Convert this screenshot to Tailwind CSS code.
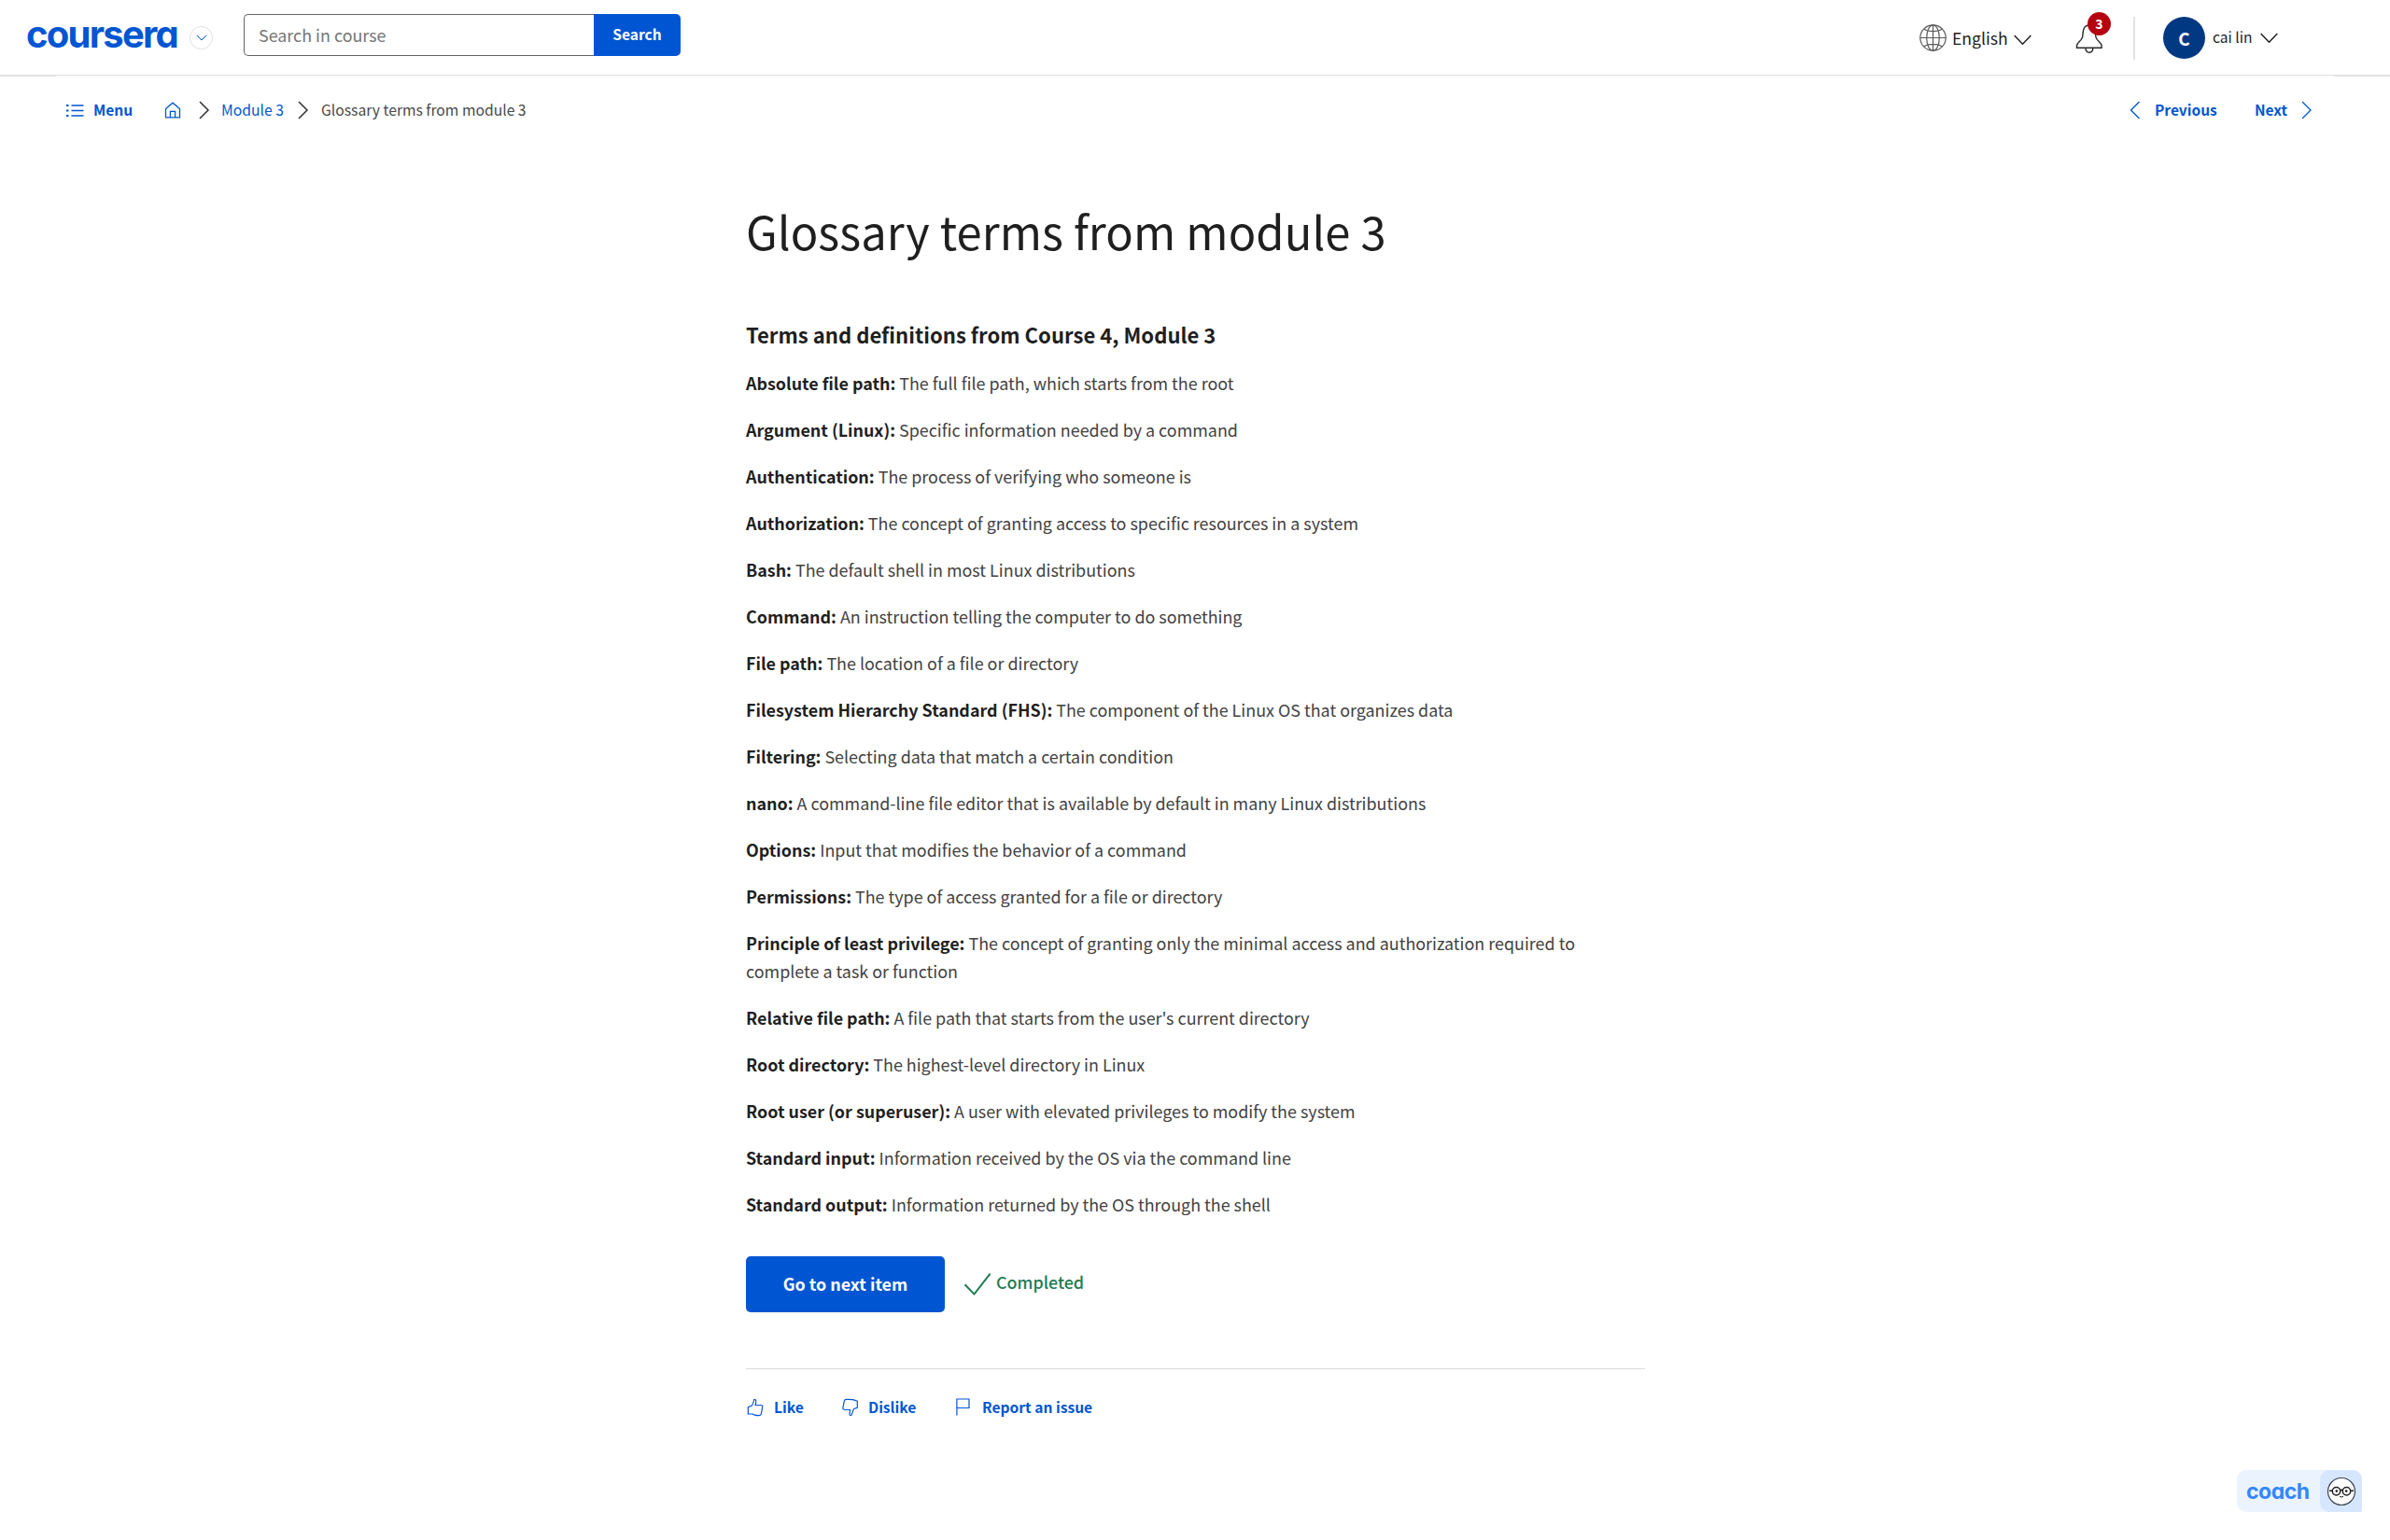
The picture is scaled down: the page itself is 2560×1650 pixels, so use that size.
<!DOCTYPE html>
<html lang="en">
<head>
<meta charset="utf-8">
<title>Glossary terms from module 3</title>
<script src="https://cdn.jsdelivr.net/npm/@tailwindcss/browser@4"></script>
</head>
<body class="flex h-[1650px] w-[2560px] flex-col overflow-hidden bg-white font-['Noto_Sans_CJK_SC','Noto_Sans',sans-serif] text-[#1f1f1f]">

<header class="flex h-[81px] shrink-0 items-start border-b border-[#dfdfdf] pl-[28px]">
  <a class="flex h-[73px] w-[175px] items-center font-['Inter',sans-serif] text-[40px] leading-none font-bold tracking-[-1.75px] text-[#0056d2] [font-feature-settings:'cv11']">coursera</a>
  <button class="mt-[28px] flex size-[25px] items-center justify-center rounded-full border border-[#e1e1e1]">
    <svg class="h-[7px] w-[12px]" viewBox="0 0 12 7" fill="none" stroke="#0056d2"><path d="M.8.8 6 6 11.2.8"/></svg>
  </button>
  <form class="mt-[15px] ml-[33px] flex h-[45px] w-[468px]">
    <div class="flex w-[375px] items-center rounded-l-[5px] border border-r-0 border-[#636363] pl-[15px] text-[17.9px] leading-none text-[#757575]">Search in course</div>
    <div class="flex flex-1 items-center justify-center rounded-r-[5px] bg-[#0056d2] pb-px text-[15.5px] leading-none font-bold text-white">Search</div>
  </form>
  <div class="ml-auto flex h-[81px] items-center">
    <svg class="size-[29px]" viewBox="0 0 29 29" fill="none" stroke="#5a5a5a" stroke-width="1.2"><circle cx="14.5" cy="14.5" r="13.7"/><ellipse cx="14.5" cy="14.5" rx="6.8" ry="13.7"/><path d="M14.5.8v27.4M.8 14.5h27.4M4.6 5.3c5 3.2 14.8 3.2 19.8 0M4.6 23.7c5-3.2 14.8-3.2 19.8 0"/></svg>
    <span class="ml-[6px] w-[66px] text-[17.6px] leading-none">English</span>
    <svg class="mt-1 h-[12px] w-[19px]" viewBox="0 0 19 12" fill="none" stroke="#1f1f1f" stroke-width="1.5"><path d="M.7 1 9.5 10.2 18.3 1"/></svg>
    <div class="relative ml-[47px] h-[32px] w-[30px]">
      <svg class="h-[32px] w-[30px]" viewBox="0 0 30 32" fill="none" stroke="#2a2a2a" stroke-width="1.4"><path d="M1.5 26.3h26.6v-2.5c0-2.8-5.5-5.3-6.3-9.5-.5-4 .2-12.3-7-12.3S8.200 10.300 7.700 14.300C7 18.500 1.500 21 1.500 23.800zM11 26.600c0 6.200 7.800 6.200 7.800 0"/></svg>
      <span class="absolute -top-[12px] left-[13px] flex size-[25px] items-center justify-center rounded-full bg-[#b5000f] text-[14px] leading-none font-bold text-white">3</span>
    </div>
    <div class="ml-[32px] h-[46px] w-[2px] bg-[#e1e1e1]"></div>
    <div class="ml-[30px] flex size-[45px] items-center justify-center rounded-full bg-[#003882] text-[19px] leading-none font-bold text-white">C</div>
    <span class="ml-[8px] w-[51px] pb-[2px] text-[15.6px] leading-none whitespace-nowrap">cai lin</span>
    <svg class="mr-[120px] mt-px h-[12px] w-[19px]" viewBox="0 0 19 12" fill="none" stroke="#1f1f1f" stroke-width="1.5"><path d="M.7 1 9.5 10.2 18.3 1"/></svg>
  </div>
</header>
<div class="flex h-px shrink-0 justify-between"><div class="w-[60px] bg-[#e5e5e5]"></div><div class="w-[60px] bg-[#e5e5e5]"></div></div>

<nav class="flex h-[72px] shrink-0 items-center pr-[83px] pl-[71px] text-[15.7px] leading-none text-[#0056d2]">
  <svg class="h-[15px] w-[19px]" viewBox="0 0 19 15" fill="none" stroke="#0056d2"><path d="M0 2h2.500M0 7.500h2.500M0 13h2.500" stroke-width="2"/><path d="M5.500 2H18.500M5.500 7.500H18.500M5.500 13H18.500" stroke-width="1.300"/></svg>
  <span class="ml-[10px] w-[76px] text-[15.6px] font-bold">Menu</span>
  <svg class="h-[18px] w-[18px]" viewBox="0 0 18 18" fill="none" stroke="#0056d2" stroke-width="1.3"><path d="M1.500 16.800V7.500L9 1.200l7.500 6.300v9.300zM6.400 16.800V10.400h5.200v6.400"/></svg>
  <svg class="ml-[19px] h-[20px] w-[12px]" viewBox="0 0 12 20" fill="none" stroke="#333" stroke-width="1.5"><path d="M1 1l9 9-9 9"/></svg>
  <span class="ml-[12px] w-[82px]">Module 3</span>
  <svg class="h-[20px] w-[12px]" viewBox="0 0 12 20" fill="none" stroke="#333" stroke-width="1.5"><path d="M1 1l9 9-9 9"/></svg>
  <span class="ml-[13px] text-[#494949]">Glossary terms from module 3</span>
  <svg class="ml-auto h-[20px] w-[12px]" viewBox="0 0 12 20" fill="none" stroke="#0056d2" stroke-width="1.3"><path d="M10.500 1l-9 9 9 9"/></svg>
  <span class="ml-[15px] w-[107px] text-[15.5px] font-bold">Previous</span>
  <span class="w-[50px] text-[15.5px] font-bold">Next</span>
  <svg class="h-[20px] w-[12px]" viewBox="0 0 12 20" fill="none" stroke="#0056d2" stroke-width="1.3"><path d="M1 1l9 9-9 9"/></svg>
</nav>

<main class="ml-[799px] flex w-[963px] flex-col">
  <h1 class="mt-[58px] text-[48.9px] leading-[70px] tracking-[0.05px]">Glossary terms from module 3</h1>
  <h2 class="mt-[57px] text-[22.1px] leading-[38px] font-bold">Terms and definitions from Course 4, Module 3</h2>
  <div class="mt-[18px] flex w-[920px] flex-col gap-[20px] text-[17.91px] leading-[30px] text-[#424242] [&_b]:font-bold [&_b]:text-[#1f1f1f]">
    <p><b>Absolute file path:</b> The full file path, which starts from the root</p>
    <p><b>Argument (Linux):</b> Specific information needed by a command</p>
    <p><b>Authentication:</b> The process of verifying who someone is</p>
    <p><b>Authorization:</b> The concept of granting access to specific resources in a system</p>
    <p><b>Bash:</b> The default shell in most Linux distributions</p>
    <p><b>Command:</b> An instruction telling the computer to do something</p>
    <p><b>File path:</b> The location of a file or directory</p>
    <p><b>Filesystem Hierarchy Standard (FHS):</b> The component of the Linux OS that organizes data</p>
    <p><b>Filtering:</b> Selecting data that match a certain condition</p>
    <p><b>nano:</b> A command-line file editor that is available by default in many Linux distributions</p>
    <p><b>Options:</b> Input that modifies the behavior of a command</p>
    <p><b>Permissions:</b> The type of access granted for a file or directory</p>
    <p><b>Principle of least privilege:</b> The concept of granting only the minimal access and authorization required to complete a task or function</p>
    <p><b>Relative file path:</b> A file path that starts from the user's current directory</p>
    <p><b>Root directory:</b> The highest-level directory in Linux</p>
    <p><b>Root user (or superuser):</b> A user with elevated privileges to modify the system</p>
    <p><b>Standard input:</b> Information received by the OS via the command line</p>
    <p><b>Standard output:</b> Information returned by the OS through the shell</p>
  </div>
  <div class="mt-[41px] flex h-[60px] items-center">
    <button class="flex h-[60px] w-[213px] items-center justify-center rounded-[5px] bg-[#0056d2] text-[17.9px] leading-none font-bold text-white">Go to next item</button>
    <svg class="ml-[20px] h-[26px] w-[30px]" viewBox="0 0 30 26" fill="none" stroke="#1d7c50" stroke-width="2"><path d="M1.500 13.300 11.500 23.600 28.600 1.600"/></svg>
    <span class="ml-[5px] pb-[4px] text-[17.9px] leading-none font-medium text-[#1d7c50]">Completed</span>
  </div>
  <div class="mt-[60px] flex h-[82px] items-center border-t border-[#dadada] text-[15.6px] leading-none font-bold text-[#0056d2]">
    <svg class="h-[20px] w-[19px]" viewBox="0 0 19 20" fill="none" stroke="#0056d2" stroke-width="1.2"><path d="M2.300 16.900V9.700L6.300 8C7.500 6.300 8.200 4.800 8.500 2.200c.4-1.200 2-.9 2.200.5.200 1.700-.2 3.300-.6 4.800h6c1.500 0 1.800 1 1.600 2l-1.300 7.200c-.3 1.300-1 1.900-2.400 1.900-2.700 0-5.200 0-7-1.600z"/></svg>
    <span class="ml-[11px] w-[72px]">Like</span>
    <svg class="h-[20px] w-[19px] -scale-y-100" viewBox="0 0 19 20" fill="none" stroke="#0056d2" stroke-width="1.2"><path d="M17.300 16.900V9.700L13.500 8.500C12.500 6.500 12 4.300 11.200 2.200c-.5-1.200-2.200-.9-2.200.5.100 1.700.4 3.300.6 4.800h-5.500c-1.500 0-2.400 1-2.200 2l1.300 7.200c.3 1.300 1 1.900 2.400 1.900 2.700.1 7.900 0 9.700-1.200z"/></svg>
    <span class="ml-[10px] w-[94px]">Dislike</span>
    <svg class="h-[19px] w-[15px]" viewBox="0 0 15 19" fill="none" stroke="#0056d2" stroke-width="1.2"><path d="M.9 18.500V1H14v9.500H.9"/></svg>
    <span class="ml-[13px]">Report an issue</span>
  </div>
</main>

<button class="absolute top-[1575px] left-[2396px] flex h-[45px] w-[134px] items-center overflow-hidden rounded-[10px] rounded-br-[2px] bg-[#ebf3ff]">
  <span class="w-[89px] pt-px pl-[10px] text-left font-['Inter',sans-serif] text-[23px] leading-none font-bold tracking-[-0.5px] text-[#3587fc] [font-feature-settings:'cv11']">coach</span>
  <span class="flex size-[45px] items-center justify-center rounded-l-[10px] bg-[#d7e6ff]">
    <svg class="size-[32px]" viewBox="0 0 32 32" fill="none" stroke="#1f1f1f"><circle cx="16" cy="16" r="14.500" fill="#fff" stroke="#3c4254" stroke-width="1.2"/><g stroke-width="1.5"><circle cx="10.500" cy="15.800" r="4.200"/><circle cx="21.500" cy="15.800" r="4.200"/><path d="M14.500 14.800q1.500-1 3 0M3 15.200h3.300M25.700 15.200H29"/></g><g fill="#1f1f1f" stroke="none"><circle cx="10.800" cy="15.600" r="1.300"/><circle cx="21.200" cy="15.600" r="1.300"/></g><path d="M14 21.300q2 1.600 4 0"/></svg>
  </span>
</button>
</body>
</html>
